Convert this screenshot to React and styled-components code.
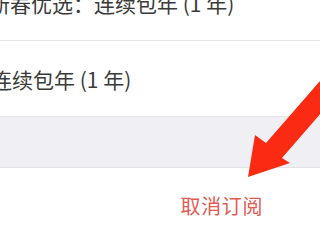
import React from 'react';
import styled, { createGlobalStyle } from 'styled-components';

const GlobalStyle = createGlobalStyle`
  html, body {
    margin: 0;
    padding: 0;
    background: #ffffff;
  }
  body {
    width: 320px;
    height: 240px;
    overflow: hidden;
  }
`;

const Page = styled.div`
  position: relative;
  width: 320px;
  height: 240px;
  overflow: hidden;
  background: #ffffff;
  font-family: "Noto Sans CJK SC", "Noto Sans", sans-serif;
`;

const PlanList = styled.div`
  display: flex;
  flex-direction: column;
  margin-top: -34px;
`;

const PlanRow = styled.div`
  display: flex;
  align-items: center;
  height: 75px;
  border-bottom: ${props => props.divider ? '1px solid #e6e6e8' : 'none'};
  box-sizing: border-box;
  white-space: nowrap;
`;

const PlanName = styled.span`
  margin-left: ${props => props.shift}px;
  font-size: 21px;
  color: #3b3b3b;
`;

const Band = styled.div`
  height: 52px;
  background: #efeff4;
  border-top: 1px solid #e4e4e8;
  border-bottom: 1px solid #e2e2e6;
  box-sizing: border-box;
`;

const ActionArea = styled.div`
  display: flex;
  justify-content: flex-end;
  padding: 23px 57px 0 0;
`;

const CancelLink = styled.span`
  font-size: 20px;
  line-height: 30px;
  color: #e35a52;
  letter-spacing: 0.6px;
`;

const ArrowLayer = styled.svg`
  position: absolute;
  top: 0;
  left: 0;
  width: 320px;
  height: 240px;
  pointer-events: none;
`;

const PointerArrow = () => (
  <ArrowLayer viewBox="0 0 320 240">
    <polygon
      points="248,177 255,135 266,143 340,58 356,73 282,158 290,163"
      fill="#fb2a12"
    />
  </ArrowLayer>
);

export default function App() {
  return (
    <>
      <GlobalStyle />
      <Page>
        <PlanList>
          <PlanRow divider>
            <PlanName shift={-11}>新春优选：连续包年 (1 年)</PlanName>
          </PlanRow>
          <PlanRow>
            <PlanName shift={-9}>连续包年 (1 年)</PlanName>
          </PlanRow>
        </PlanList>
        <Band />
        <ActionArea>
          <CancelLink>取消订阅</CancelLink>
        </ActionArea>
        <PointerArrow />
      </Page>
    </>
  );
}
